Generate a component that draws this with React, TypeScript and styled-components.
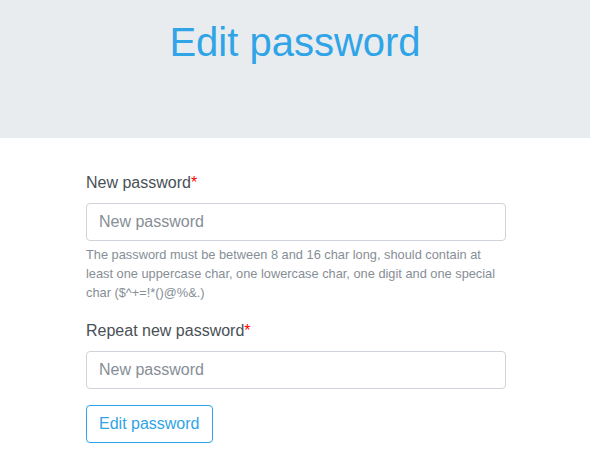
import React from "react";
import styled, { createGlobalStyle } from "styled-components";

const Global = createGlobalStyle`
  html, body { margin: 0; padding: 0; background: #fff; }
  body {
    font-family: "Liberation Sans", Arial, sans-serif;
    font-size: 16px;
    line-height: 1.5;
    color: #495057;
  }
  * { box-sizing: border-box; }
`;

const Header = styled.header`
  background: #e9ecef;
  height: 138px;
  padding-top: 18px;
`;

const Title = styled.h1`
  margin: 0;
  font-size: 40px;
  line-height: 48px;
  font-weight: 400;
  color: #2fa4e7;
  text-align: center;
`;

const Form = styled.form`
  width: 420px;
  margin-left: calc(50% - 209px);
  padding-top: 33px;
`;

const Group = styled.div`
  margin-bottom: 16px;
`;

const Label = styled.label`
  display: block;
  margin-bottom: 8px;
  line-height: 24px;
  color: #495057;
`;

const Required = styled.span`
  color: #ff0000;
`;

const Input = styled.input`
  display: block;
  width: 100%;
  height: 38px;
  padding: 6px 12px;
  font-family: inherit;
  font-size: 16px;
  color: #495057;
  background: #fff;
  border: 1px solid #ced4da;
  border-radius: 4px;
  outline: none;
  &::placeholder { color: #868e96; opacity: 1; }
`;

const Help = styled.small`
  display: block;
  margin-top: 4px;
  font-size: 12.8px;
  line-height: 19.2px;
  color: #868e96;
`;

const Button = styled.button`
  height: 38px;
  padding: 0 12px;
  font-family: inherit;
  font-size: 16px;
  color: #2fa4e7;
  background: #fff;
  border: 1px solid #2fa4e7;
  border-radius: 4px;
  cursor: pointer;
`;

export default function App() {
  return (
    <>
      <Global />
      <Header>
        <Title>Edit password</Title>
      </Header>
      <Form onSubmit={(e) => e.preventDefault()}>
        <Group>
          <Label>
            New password<Required>*</Required>
          </Label>
          <Input type="password" placeholder="New password" />
          <Help>
            The password must be between 8 and 16 char long, should contain at least one uppercase char, one lowercase char, one digit and one special char ($^+=!*()@%&.)
          </Help>
        </Group>
        <Group>
          <Label>
            Repeat new password<Required>*</Required>
          </Label>
          <Input type="password" placeholder="New password" />
        </Group>
        <Button type="submit">Edit password</Button>
      </Form>
    </>
  );
}
